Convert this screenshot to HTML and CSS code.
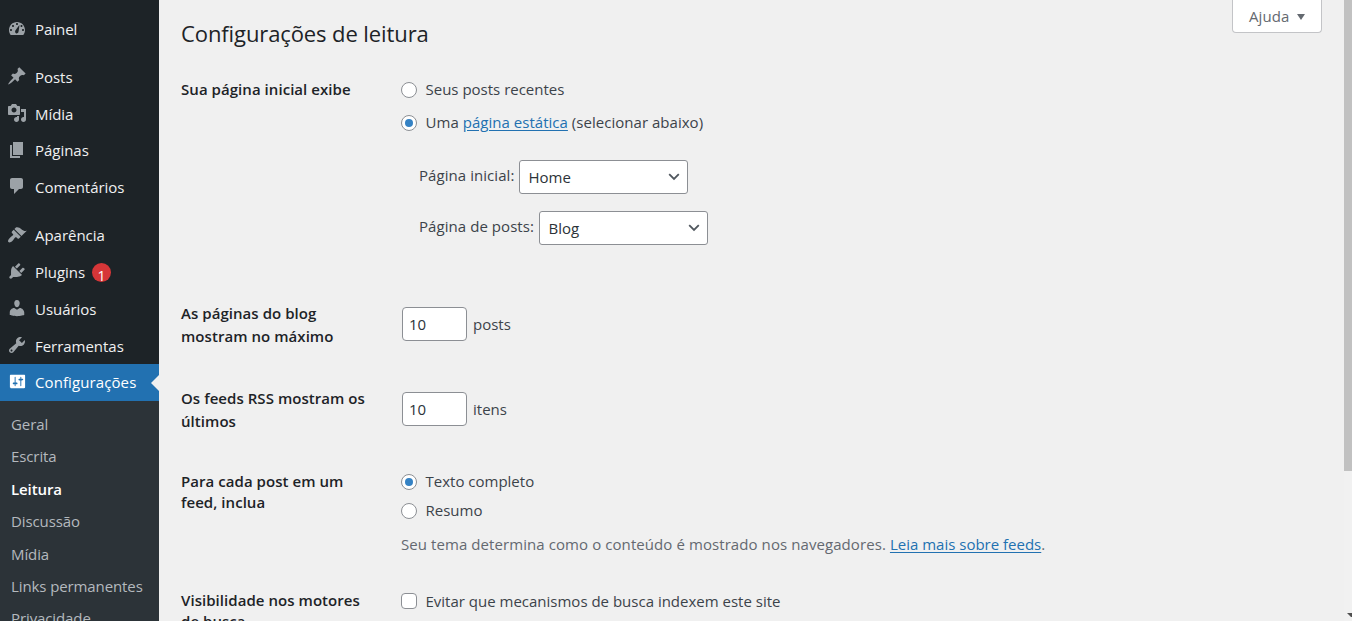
FILE: index.html
```html
<!DOCTYPE html>
<html lang="pt-BR">
<head>
<meta charset="utf-8">
<title>Configurações de leitura</title>
<link rel="stylesheet" href="styles.css">
</head>
<body>
<div class="app">
  <nav class="sidebar">
    <ul class="menu">
      <li class="item"><svg class="icon" viewBox="0 0 20 20"><path d="M3.76 17h12.48c1.1-1.37 1.76-3.11 1.76-5 0-4.42-3.58-8-8-8s-8 3.58-8 8c0 1.89.66 3.63 1.76 5zM9 6c0-.55.45-1 1-1s1 .45 1 1c0 .56-.45 1-1 1s-1-.44-1-1zM5 8c0-.55.45-1 1-1s1 .45 1 1c0 .56-.45 1-1 1s-1-.44-1-1zm3.97 7.2c-.9-.5-1.1-1.5-.7-2.4.5-1.1 4.2-5.8 4.2-5.8s-.6 5.9-1.1 7.2c-.4 1-1.5 1.5-2.4 1zM3 12c0-.55.45-1 1-1s1 .45 1 1c0 .56-.45 1-1 1s-1-.44-1-1zm12 0c0-.55.45-1 1-1s1 .45 1 1c0 .56-.45 1-1 1s-1-.44-1-1zM13.5 8c0-.55.45-1 1-1s1 .45 1 1c0 .56-.45 1-1 1s-1-.44-1-1z"/></svg><span>Painel</span></li>
      <li class="item gap"><svg class="icon" viewBox="0 0 20 20"><path d="M10.44 3.02l1.82-1.82 6.36 6.35-1.83 1.82c-1.05-.68-2.48-.57-3.41.36l-.75.75c-.92.93-1.04 2.35-.35 3.41l-1.83 1.82-2.41-2.41-2.8 2.79c-.42.42-3.38 2.71-3.8 2.29s1.86-3.39 2.28-3.81l2.79-2.79L4.1 9.36l1.83-1.82c1.05.69 2.48.57 3.4-.36l.75-.75c.93-.92 1.05-2.35.36-3.41z"/></svg><span>Posts</span></li>
      <li class="item"><svg class="icon" viewBox="0 0 20 20"><path d="M13 11V4c0-.55-.45-1-1-1h-1.67L9 1H5L3.67 3H2c-.55 0-1 .45-1 1v7c0 .55.45 1 1 1h10c.55 0 1-.45 1-1zM7 4.5c1.38 0 2.5 1.12 2.5 2.5S8.38 9.5 7 9.5 4.5 8.38 4.5 7 5.62 4.5 7 4.5zM14 6h5v10.5c0 1.38-1.12 2.5-2.5 2.5S14 17.88 14 16.5s1.12-2.5 2.5-2.5c.17 0 .34.02.5.05V9h-3V6zm-4 8.05V13h2v3.5c0 1.38-1.12 2.5-2.5 2.5S7 17.88 7 16.5 8.12 14 9.5 14c.17 0 .34.02.5.05z"/></svg><span>Mídia</span></li>
      <li class="item"><svg class="icon" viewBox="0 0 20 20"><path d="M6 15V2h10v13H6zm-1 1h8v2H3V5h2v11z"/></svg><span>Páginas</span></li>
      <li class="item"><svg class="icon" viewBox="0 0 20 20"><path d="M5 2h9c1.1 0 2 .9 2 2v7c0 1.1-.9 2-2 2h-2l-5 5v-5H5c-1.1 0-2-.9-2-2V4c0-1.1.9-2 2-2z"/></svg><span>Comentários</span></li>
      <li class="item gap"><svg class="icon" viewBox="0 0 20 20"><path d="M14.48 11.06L7.41 3.99l1.5-1.5c.5-.56 2.3-.47 3.51.32 1.21.8 1.43 1.28 2.91 2.1 1.18.64 2.45 1.26 4.45.85zm-.71.71L6.7 4.7 4.93 6.47c-.39.39-.39 1.02 0 1.41l1.06 1.06c.39.39.39 1.03 0 1.42-.6.6-1.43 1.11-2.21 1.69-.35.26-.7.53-1.01.84C1.43 14.23.4 16.08 1.4 17.07c.99 1 2.84-.03 4.18-1.36.31-.31.58-.66.85-1.02.57-.78 1.08-1.61 1.69-2.21.39-.39 1.02-.39 1.41 0l1.06 1.06c.39.39 1.02.39 1.41 0z"/></svg><span>Aparência</span></li>
      <li class="item"><svg class="icon" viewBox="0 0 20 20"><path d="M13.11 4.36L9.87 7.6 8 5.73l3.24-3.24c.35-.34 1.05-.2 1.56.32.52.51.66 1.21.31 1.55zm-8 1.77l.91-1.12 9.01 9.01-1.19.84c-.71.71-2.63 1.16-3.82 1.16H6.14L4.9 17.26c-.59.59-1.54.59-2.12 0-.59-.58-.59-1.53 0-2.12l1.24-1.24v-3.88c0-1.13.4-3.19 1.09-3.89zm7.26 3.97l3.24-3.24c.34-.35 1.04-.21 1.55.31.52.51.66 1.21.31 1.55l-3.24 3.25z"/></svg><span>Plugins</span><b class="badge">1</b></li>
      <li class="item"><svg class="icon" viewBox="0 0 20 20"><path d="M10 9.25c-2.27 0-2.73-3.44-2.73-3.44C7 4.02 7.82 2 9.97 2c2.16 0 2.98 2.02 2.71 3.81 0 0-.41 3.44-2.68 3.44zm0 2.57L12.72 10c2.39 0 4.52 2.33 4.52 4.53v2.49s-3.65 1.13-7.24 1.13c-3.65 0-7.24-1.13-7.24-1.13v-2.49c0-2.25 1.94-4.48 4.47-4.48z"/></svg><span>Usuários</span></li>
      <li class="item"><svg class="icon" viewBox="0 0 20 20"><path d="M16.68 9.77c-1.34 1.34-3.3 1.67-4.95.99l-5.41 6.52c-.99.99-2.59.99-3.58 0s-.99-2.59 0-3.57l6.52-5.42c-.68-1.65-.35-3.61.99-4.95 1.28-1.28 3.12-1.62 4.72-1.06l-2.89 2.89 2.82 2.82 2.86-2.87c.53 1.58.18 3.39-1.08 4.65zM3.81 16.21c.4.39 1.04.39 1.43 0 .4-.4.4-1.04 0-1.43-.39-.4-1.03-.4-1.43 0-.39.39-.39 1.03 0 1.43z"/></svg><span>Ferramentas</span></li>
      <li class="item current"><svg class="icon" viewBox="0 0 20 20"><path d="M18 16V4c0-.55-.45-1-1-1H3c-.55 0-1 .45-1 1v12c0 .55.45 1 1 1h14c.55 0 1-.45 1-1zM8 11h1c.55 0 1 .45 1 1s-.45 1-1 1H8v1.5c0 .28-.22.5-.5.5s-.5-.22-.5-.5V13H6c-.55 0-1-.45-1-1s.45-1 1-1h1V5.5c0-.28.22-.5.5-.5s.5.22.5.5V11zm5-2h-1c-.55 0-1-.45-1-1s.45-1 1-1h1V5.5c0-.28.22-.5.5-.5s.5.22.5.5V7h1c.55 0 1 .45 1 1s-.45 1-1 1h-1v5.5c0 .28-.22.5-.5.5s-.5-.22-.5-.5V9z"/></svg><span>Configurações</span></li>
    </ul>
    <ul class="submenu">
      <li>Geral</li>
      <li>Escrita</li>
      <li class="active">Leitura</li>
      <li>Discussão</li>
      <li>Mídia</li>
      <li>Links permanentes</li>
      <li>Privacidade</li>
    </ul>
  </nav>

  <main class="content">
    <header class="top">
      <h1>Configurações de leitura</h1>
      <button class="help" type="button">Ajuda<span class="caret"></span></button>
    </header>

    <section class="row row-home">
      <h2 class="lead">Sua página inicial exibe</h2>
      <div class="field raised">
        <label class="choice"><span class="radio"></span><span>Seus posts recentes</span></label>
        <label class="choice second"><span class="radio on"></span><span>Uma <a>página estática</a> (selecionar abaixo)</span></label>
        <div class="pick"><span class="pick-label home">Página inicial:</span><span class="select">Home<svg class="chev" viewBox="0 0 12 8"><path d="M1.2 1.2 6 6l4.8-4.8"/></svg></span></div>
        <div class="pick"><span class="pick-label blog">Página de posts:</span><span class="select">Blog<svg class="chev" viewBox="0 0 12 8"><path d="M1.2 1.2 6 6l4.8-4.8"/></svg></span></div>
      </div>
    </section>

    <section class="row row-num">
      <h2>As páginas do blog<br>mostram no máximo</h2>
      <div class="field num"><span class="input">10</span><span>posts</span></div>
    </section>

    <section class="row row-rss">
      <h2>Os feeds RSS mostram os<br>últimos</h2>
      <div class="field num"><span class="input">10</span><span>itens</span></div>
    </section>

    <section class="row row-feed">
      <h2 class="tight">Para cada post em um<br>feed, inclua</h2>
      <div class="field raised">
        <label class="choice"><span class="radio on"></span><span>Texto completo</span></label>
        <label class="choice near"><span class="radio"></span><span>Resumo</span></label>
        <p class="note">Seu tema determina como o conteúdo é mostrado nos navegadores. <a>Leia mais sobre feeds</a>.</p>
      </div>
    </section>

    <section class="row row-vis">
      <h2 class="tight">Visibilidade nos motores<br>de busca</h2>
      <div class="field">
        <label class="choice"><span class="check"></span><span>Evitar que mecanismos de busca indexem este site</span></label>
      </div>
    </section>
  </main>

  <div class="scrollbar"><div class="thumb"></div><svg class="down" viewBox="0 0 5 4"><path d="M0 0h5v4H4L3 3 2 2 0 0z"/></svg></div>
</div>
</body>
</html>
```

FILE: styles.css
```css
* { box-sizing: border-box; }
body {
  margin: 0;
  height: 621px;
  overflow: hidden;
  background: #f0f0f0;
  color: #3c434a;
  font-family: "Open Sans", "Noto Sans", sans-serif;
  font-size: 15px;
  line-height: 22px;
}
ul { list-style: none; margin: 0; padding: 0; }
h1, h2, p { margin: 0; }
a { color: #2271b1; text-decoration: underline; text-underline-offset: 2px; }

.app { display: flex; height: 621px; overflow: hidden; }

.sidebar { width: 159px; flex: none; background: #1d2327; color: #f0f0f1; overflow: hidden; }
.menu { padding-top: 10.5px; }
.item { position: relative; display: flex; align-items: center; height: 36.75px; padding-left: 7px; letter-spacing: -0.03px; }
.item span { margin-top: -0.6px; }
.item.gap { margin-top: 11.5px; }
.icon { width: 20px; height: 20px; flex: none; margin: -2px 8px 0 0; fill: #9ca2a7; fill-rule: evenodd; }
.current { background: #2271b1; color: #fff; letter-spacing: 0.1px; }
.current .icon { width: 19px; height: 19px; margin: -2px 8px 0 1px; fill: #fff; }
.current::after {
  content: "";
  position: absolute;
  right: 0;
  top: 10.5px;
  border: 8px solid transparent;
  border-left: 0;
  border-right-color: #f0f0f0;
}
.badge { width: 19px; height: 19px; margin-left: 7px; border-radius: 50%; background: #d63638; color: #fff; text-align: center; font-weight: 400; font-size: 14px; line-height: 25px; }

.submenu { height: 240px; padding-top: 7px; background: #2c3338; color: #b4b9be; letter-spacing: -0.1px; }
.submenu li { height: 32.4px; line-height: 32.4px; padding-left: 11px; }
.submenu .active { color: #fff; font-weight: 600; }

.content { flex: 1; min-width: 0; padding-left: 22px; }
.top { display: flex; justify-content: space-between; align-items: flex-start; height: 79px; padding-right: 22px; }
h1 { padding-top: 17px; color: #1d2327; font-size: 22px; line-height: 32px; font-weight: 400; letter-spacing: -0.1px; }
.help { display: flex; align-items: center; width: 90px; height: 33px; padding: 0 0 0 16px; border: 1px solid #c3c4c7; border-top: 0; border-radius: 0 0 4px 4px; background: #fff; color: #646970; font: inherit; letter-spacing: 0.1px; }
.caret { margin: 2px 0 0 8px; border: 4px solid transparent; border-top: 6px solid #646970; border-bottom: 0; }

.row { display: flex; }
.row-home { height: 223px; }
.row-num { height: 85px; }
.row-rss { height: 84px; }
.row-feed { height: 119px; }
h2 { width: 220px; flex: none; color: #1d2327; font-size: 15px; line-height: 23px; font-weight: 600; letter-spacing: 0.05px; }
h2.lead { line-height: 21px; }
h2.tight { line-height: 21px; }
.field { flex: 1; min-width: 0; }
.choice { display: flex; align-items: center; height: 22px; gap: 8.5px; }
.raised .choice span:last-child { margin-top: -2px; }
.second { margin-top: 11px; letter-spacing: 0.03px; }
.near { margin-top: 7px; }
.radio, .check { width: 16px; height: 16px; flex: none; border: 1px solid #8c8f94; background: #fff; }
.radio { border-radius: 50%; }
.check { border-radius: 4px; }
.radio.on { display: flex; align-items: center; justify-content: center; }
.radio.on::before { content: ""; width: 8px; height: 8px; border-radius: 50%; background: #3582c4; }
.pick { display: flex; height: 34px; margin: 17px 0 0 18px; }
.second + .pick { margin-top: 26px; }
.pick-label { padding-top: 4px; letter-spacing: 0.06px; }
.home { width: 100px; }
.blog { width: 120px; }
.select { display: flex; align-items: center; justify-content: space-between; width: 169px; height: 34px; padding: 0 7px 0 8.5px; border: 1px solid #8c8f94; border-radius: 3px; background: #fff; color: #2c3338; }
.chev { width: 12px; height: 8px; fill: none; stroke: #50575e; stroke-width: 1.8; }
.num { display: flex; align-items: center; height: 34px; margin-top: 5px; gap: 6px; padding-left: 1px; }
.input { width: 65px; height: 34px; padding: 0 0 0 6px; line-height: 32px; border: 1px solid #8c8f94; border-radius: 4px; background: #fff; color: #2c3338; }
.note { margin-top: 11px; color: #646970; letter-spacing: 0.08px; }
.note a { letter-spacing: 0; }

.scrollbar { display: flex; flex-direction: column; justify-content: space-between; width: 8px; flex: none; background: #f1f1f1; }
.thumb { height: 471px; background: #c1c1c1; }
.down { width: 5px; height: 4px; margin: 0 0 4px 3px; fill: #505050; }
```
